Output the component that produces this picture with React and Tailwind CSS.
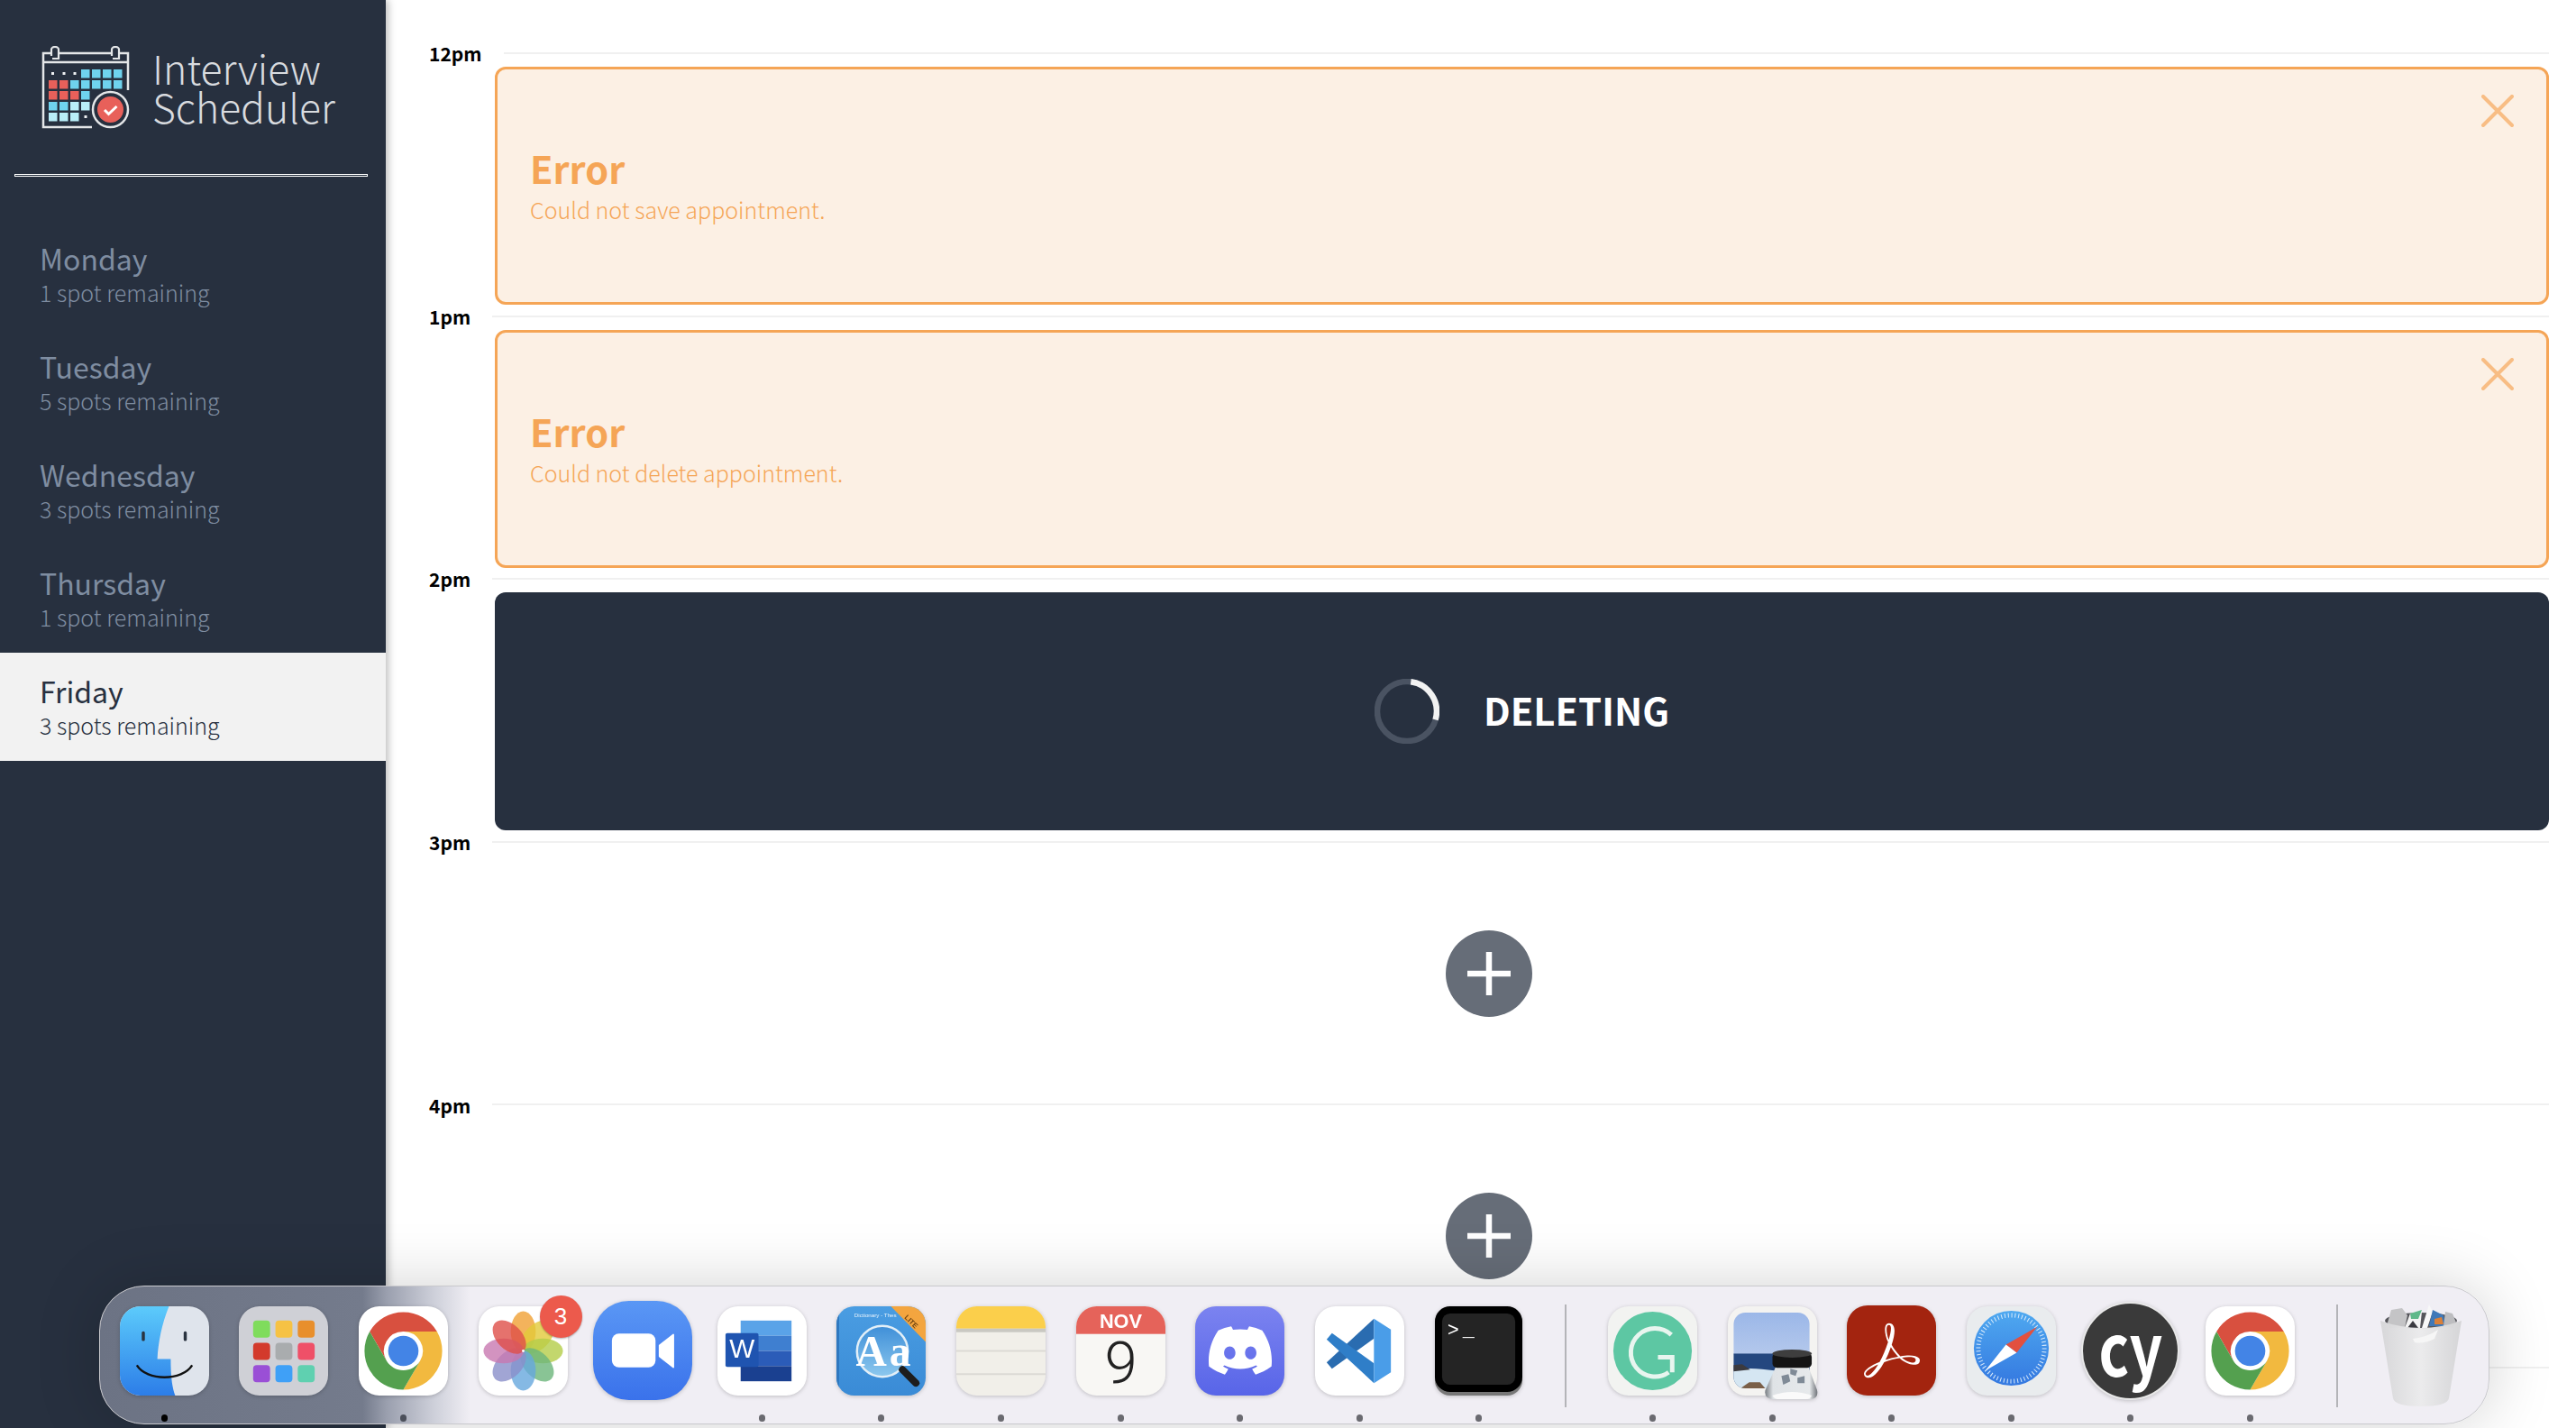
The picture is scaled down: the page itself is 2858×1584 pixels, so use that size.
import { SiDiscord, SiAdobeacrobatreader } from "react-icons/si";

const days = [
  { name: "Monday", spots: "1 spot remaining" },
  { name: "Tuesday", spots: "5 spots remaining" },
  { name: "Wednesday", spots: "3 spots remaining" },
  { name: "Thursday", spots: "1 spot remaining" },
  { name: "Friday", spots: "3 spots remaining", selected: true },
];

const Logo = () => {
  const cols = [54, 66, 78, 90, 102, 114, 126];
  const rows = [77, 89, 101, 113, 125];
  const blue = "#6fd3ee";
  const red = "#e8605a";
  const pale = "#b9eef8";
  const cells = [
    [null, null, null, blue, blue, blue, blue],
    [red, red, blue, blue, blue, blue, blue],
    [red, red, red, blue],
    [blue, blue, pale, pale],
    [pale, pale, pale],
  ];
  return (
    <svg viewBox="46 51 98 92" className="w-[98px] h-[92px] shrink-0">
      <path
        d="M102 141H48V59H57M66 59H124M133 59H142V100M48 69H142"
        fill="none"
        stroke="#e4e6e8"
        strokeWidth="2.5"
      />
      <path d="M57 62V55a4 3 0 0 1 8 0V65H58M124 62V55a4 3 0 0 1 8 0V65H125" fill="none" stroke="#e4e6e8" strokeWidth="2.2" />
      {cells.map((row, r) =>
        row.map((c, i) =>
          c ? <rect key={`${r}-${i}`} x={cols[i]} y={rows[r]} width="9.5" height="9.5" fill={c} /> : null
        )
      )}
      {[57, 69.5, 81.5].map((x) => (
        <rect key={x} x={x} y="80" width="3" height="3" fill="#eef0f2" />
      ))}
      <rect x="93.5" y="128" width="3" height="3" fill="#eef0f2" />
      <circle cx="122.5" cy="121.5" r="19.5" fill="#27303f" stroke="#e4e6e8" strokeWidth="2.5" />
      <circle cx="122.5" cy="121.5" r="14.5" fill={red} />
      <path d="M116 122l4.5 4.5 9-8.5" fill="none" stroke="#fff" strokeWidth="3" />
    </svg>
  );
};

const Sidebar = () => (
  <aside className="w-[428px] shrink-0 bg-[#27303f] shadow-[3px_0_8px_rgba(0,0,0,0.25)] z-10">
    <div className="flex items-center pl-[46px] pt-[51px] h-[143px] gap-[25px]">
      <Logo />
      <div className="text-[44.5px] leading-[43px] font-light text-[#d8dbdf] mt-[-3px]">
        <div>Interview</div>
        <div>Scheduler</div>
      </div>
    </div>
    <div className="ml-[16px] w-[392px] h-[3px] mt-[50px] border border-white" />
    <ul className="mt-[48px]">
      {days.map((d) => (
        <li
          key={d.name}
          className={`h-[120px] pl-[44px] pt-[20px] ${d.selected ? "bg-[#f2f2f2] text-[#27303f]" : "text-[#7f8da1]"}`}
        >
          <h2 className="text-[32px] leading-[44px]">{d.name}</h2>
          <h3 className="text-[25px] leading-[32px] font-light">{d.spots}</h3>
        </li>
      ))}
    </ul>
  </aside>
);

const Header = ({ time }) => (
  <div className="flex items-center h-[2px] shrink-0">
    <span className="text-[21px] font-bold text-black mt-[2px]">{time}</span>
    <div className="flex-1 h-[2px] bg-[#f0f0f0] ml-[24px]" />
  </div>
);

const ErrorCard = ({ message }) => (
  <div className="relative ml-[73px] mt-[14px] h-[264px] rounded-[12px] border-[3px] border-[#f5a556] bg-[#fcf0e4] pl-[36px] pt-[80px] text-[#f5a556]">
    <h2 className="text-[41.5px] leading-[59px] font-bold">Error</h2>
    <p className="text-[25px] leading-[32px] font-light">{message}</p>
    <svg viewBox="0 0 36 36" className="absolute right-[36px] top-[28px] w-[36px] h-[36px]">
      <path d="M2 2L34 34M34 2L2 34" stroke="#f8bd84" strokeWidth="4" strokeLinecap="round" />
    </svg>
  </div>
);

const DeletingCard = () => (
  <div className="ml-[73px] mt-[14px] h-[264px] rounded-[12px] bg-[#27303f] flex items-center justify-center gap-[49px]">
    <svg viewBox="0 0 72 72" className="w-[72px] h-[72px]">
      <circle cx="36" cy="36" r="33" fill="none" stroke="#4a5362" strokeWidth="6.5" />
      <path d="M42 3.5A33 33 0 0 1 67 47" transform="rotate(-3 36 36)" fill="none" stroke="#f2f2f2" strokeWidth="6.5" />
    </svg>
    <h4 className="text-[41.7px] leading-none font-bold text-white mt-[-2px]">DELETING</h4>
  </div>
);

const AddButton = () => (
  <div className="flex-1 flex items-center justify-center">
    <div className="w-[96px] h-[96px] rounded-full bg-[#666d78] flex items-center justify-center">
      <svg viewBox="0 0 48 48" className="w-[48px] h-[48px]">
        <path d="M24 0V48M0 24H48" stroke="#fff" strokeWidth="6.5" />
      </svg>
    </div>
  </div>
);

const Slot = ({ time, children }) => (
  <div className="h-[291.6px] flex flex-col">
    <Header time={time} />
    {children}
  </div>
);

const Chrome = () => (
  <svg viewBox="0 0 100 100" className="w-full h-full">
    <rect width="100" height="100" rx="23" fill="#fff" />
    <path d="M12.3 28.25A43.5 43.5 0 0 1 87.7 28.25L50 28.25A21.75 21.75 0 0 0 31.2 61Z" fill="#d8503f" />
    <path d="M87.7 28.25A43.5 43.5 0 0 1 50 93.5L68.8 61A21.75 21.75 0 0 0 50 28.25Z" fill="#f2b93f" />
    <path d="M50 93.5A43.5 43.5 0 0 1 12.3 28.25L31.2 61A21.75 21.75 0 0 0 68.8 61Z" fill="#54a04f" />
    <circle cx="50" cy="50" r="21" fill="#fff" />
    <circle cx="50" cy="50" r="17" fill="#4384e6" />
  </svg>
);

const Finder = () => (
  <svg viewBox="0 0 100 100" className="w-full h-full">
    <defs>
      <linearGradient id="finderBlue" x1="0" y1="0" x2="0" y2="1">
        <stop offset="0" stopColor="#5ccbfb" />
        <stop offset="1" stopColor="#2c7de8" />
      </linearGradient>
      <clipPath id="finderClip">
        <rect width="100" height="100" rx="23" />
      </clipPath>
    </defs>
    <g clipPath="url(#finderClip)">
      <rect width="100" height="100" fill="#dfe4ec" />
      <path d="M55 0C47 20 43 40 42 59H57C57 75 58 90 62 100H0V0Z" fill="url(#finderBlue)" />
    </g>
    <rect x="24.5" y="28" width="3.5" height="11" rx="1.7" fill="#2a3340" />
    <rect x="71.5" y="28" width="3.5" height="11" rx="1.7" fill="#2a3340" />
    <path d="M19 66C30 84 70 84 81 66" fill="none" stroke="#111" strokeWidth="2.4" />
  </svg>
);

const Launchpad = () => {
  const tiles = ["#7fdc5c", "#f6c244", "#e88f2c", "#d33a2c", "#a9acae", "#ef5068", "#9a4fd6", "#3fa0f7", "#5fd0b0"];
  return (
    <svg viewBox="0 0 100 100" className="w-full h-full">
      <rect width="100" height="100" rx="23" fill="#cfd0d6" />
      {tiles.map((c, i) => (
        <rect key={c} x={16 + (i % 3) * 25} y={16 + Math.floor(i / 3) * 25} width="19" height="19" rx="4" fill={c} />
      ))}
    </svg>
  );
};

const Photos = () => {
  const petals = ["#f0a033", "#e2c93a", "#b4cd48", "#6cb57a", "#66a8dd", "#8a8ec9", "#c878b0", "#de4f48"];
  return (
    <svg viewBox="0 0 100 100" className="w-full h-full">
      <rect width="100" height="100" rx="23" fill="#fff" />
      {petals.map((c, i) => (
        <ellipse key={c} cx="50" cy="28" rx="14" ry="22.5" fill={c} opacity="0.8" transform={`rotate(${i * 45} 50 50)`} />
      ))}
      <circle cx="50" cy="50" r="1.5" fill="#fff" />
    </svg>
  );
};

const ZoomApp = () => (
  <svg viewBox="0 0 100 100" className="w-full h-full">
    <defs>
      <linearGradient id="zoomBlue" x1="0" y1="0" x2="0" y2="1">
        <stop offset="0" stopColor="#5a97f5" />
        <stop offset="1" stopColor="#3a72eb" />
      </linearGradient>
    </defs>
    <rect width="100" height="100" rx="36" fill="url(#zoomBlue)" />
    <rect x="19" y="33" width="44" height="34" rx="7" fill="#fff" />
    <path d="M67 45L81 34V67L67 56Z" fill="#fff" stroke="#fff" strokeWidth="1.5" strokeLinejoin="round" />
  </svg>
);

const Word = () => (
  <svg viewBox="0 0 100 100" className="w-full h-full">
    <rect width="100" height="100" rx="23" fill="#fff" />
    <rect x="26" y="16" width="57" height="17" fill="#5aa3e8" />
    <rect x="26" y="33" width="57" height="17" fill="#3f7fd0" />
    <rect x="26" y="50" width="57" height="17" fill="#2b5cb8" />
    <rect x="26" y="67" width="57" height="17" fill="#1a4090" />
    <rect x="9" y="30" width="37" height="38" rx="2" fill="#1f54b0" />
    <text x="27.5" y="58" textAnchor="middle" fontSize="30" fontFamily="Liberation Sans" fill="#fff">W</text>
  </svg>
);

const Dictionary = () => (
  <svg viewBox="0 0 100 100" className="w-full h-full">
    <defs>
      <clipPath id="dictClip">
        <rect width="100" height="100" rx="20" />
      </clipPath>
      <linearGradient id="dictBlue" x1="0" y1="0" x2="0" y2="1">
        <stop offset="0" stopColor="#4a9de2" />
        <stop offset="1" stopColor="#3a8bd6" />
      </linearGradient>
      <linearGradient id="lensBlue" x1="0" y1="0" x2="0" y2="1">
        <stop offset="0" stopColor="#3f8fd8" />
        <stop offset="1" stopColor="#8cc8ee" />
      </linearGradient>
    </defs>
    <g clipPath="url(#dictClip)">
      <rect width="100" height="100" fill="url(#dictBlue)" />
      <rect width="3" height="100" fill="#2f78c0" />
      <path d="M61 0H100V40Z" fill="#f3a53f" />
      <text x="84" y="20" textAnchor="middle" fontSize="8" fontWeight="bold" fontFamily="Liberation Sans" fill="#6e4310" transform="rotate(45 84 17)">LITE</text>
    </g>
    <text x="20" y="12" fontSize="6.3" fontFamily="Liberation Sans" fill="#e6f2fb">Dictionary - Thes</text>
    <circle cx="51.5" cy="50.5" r="28.5" fill="url(#lensBlue)" stroke="#e2eff8" strokeWidth="2.5" />
    <text x="54" y="67" textAnchor="middle" fontSize="48" letterSpacing="3" fontWeight="bold" fontFamily="Liberation Serif" fill="#fff">Aa</text>
    <path d="M74 71L89 86" stroke="#1d1d1d" strokeWidth="8" strokeLinecap="round" />
  </svg>
);

const Notes = () => (
  <svg viewBox="0 0 100 100" className="w-full h-full">
    <defs>
      <clipPath id="notesClip">
        <rect width="100" height="100" rx="23" />
      </clipPath>
    </defs>
    <g clipPath="url(#notesClip)">
      <rect width="100" height="100" fill="#f1efe9" />
      <rect width="100" height="25" fill="#fbcf4b" />
      <rect y="25" width="100" height="4" fill="#c9c8c2" />
      <rect y="49" width="100" height="2" fill="#dcdad5" />
      <rect y="75" width="100" height="2" fill="#dcdad5" />
    </g>
  </svg>
);

const CalendarApp = () => (
  <svg viewBox="0 0 100 100" className="w-full h-full">
    <defs>
      <clipPath id="calClip">
        <rect width="100" height="100" rx="23" />
      </clipPath>
    </defs>
    <g clipPath="url(#calClip)">
      <rect width="100" height="100" fill="#f8f7f4" />
      <rect width="100" height="31" fill="#e5635a" />
    </g>
    <text x="50" y="24" textAnchor="middle" fontSize="22" fontWeight="bold" fontFamily="Liberation Sans" fill="#fff">NOV</text>
    <text x="50" y="86" textAnchor="middle" fontSize="66" fontWeight="300" fontFamily="Roboto" fill="#222">9</text>
  </svg>
);

const Discord = () => (
  <div className="w-full h-full rounded-[23px] bg-[linear-gradient(180deg,#7b83f0,#5865e8)] flex items-center justify-center">
    <SiDiscord className="w-[70px] h-[70px] text-white" />
  </div>
);

const VSCode = () => (
  <svg viewBox="0 0 100 100" className="w-full h-full">
    <rect width="100" height="100" rx="23" fill="#fff" />
    <path d="M66 14L13 63L19 70L66 36Z" fill="#2a6cb0" />
    <path d="M13 37L19 30L66 64V86Z" fill="#2f7ec8" />
    <path d="M66 14L85 26V74L66 86Z" fill="#4a9de8" />
  </svg>
);

const Terminal = () => (
  <svg viewBox="0 0 100 100" className="w-full h-full">
    <rect x="1" y="2" width="98" height="98" rx="17" fill="#777" />
    <rect x="1" y="0" width="98" height="96" rx="17" fill="#000" />
    <rect x="9" y="8" width="82" height="80" rx="9" fill="#242424" />
    <text x="15" y="33" fontSize="22" fontFamily="Liberation Mono" fill="#fff">&gt;</text>
    <text x="32" y="33" fontSize="22" fontWeight="bold" fontFamily="Liberation Mono" fill="#fff">_</text>
  </svg>
);

const Grammarly = () => (
  <svg viewBox="0 0 100 100" className="w-full h-full">
    <rect width="100" height="100" rx="23" fill="#f2f3f1" />
    <circle cx="50" cy="50" r="44" fill="#5dc7a3" />
    <path d="M71 32A27 27 0 1 0 68 74M56 57H72V74" fill="none" stroke="#e8f5ef" strokeWidth="5" />
  </svg>
);

const Preview = () => (
  <svg viewBox="0 0 100 100" className="w-full h-full overflow-visible">
    <defs>
      <clipPath id="photoClip">
        <rect x="6.5" y="7" width="85" height="85" rx="13" />
      </clipPath>
      <linearGradient id="sky" x1="0" y1="0" x2="0" y2="1">
        <stop offset="0" stopColor="#9bb7e8" />
        <stop offset="1" stopColor="#b4c8ec" />
      </linearGradient>
      <linearGradient id="jarGlass" x1="0" y1="0" x2="1" y2="0">
        <stop offset="0" stopColor="#777c82" />
        <stop offset="0.15" stopColor="#dfe3e6" />
        <stop offset="0.85" stopColor="#e6e9eb" />
        <stop offset="1" stopColor="#6f7379" />
      </linearGradient>
    </defs>
    <rect width="100" height="100" rx="20" fill="#f4f3f1" />
    <g clipPath="url(#photoClip)">
      <rect x="6" y="7" width="86" height="47" fill="url(#sky)" />
      <rect x="6" y="53" width="86" height="40" fill="#24477f" />
      <path d="M6 72C20 68 36 70 52 72V93H6Z" fill="#d5e6f2" />
      <path d="M6 66L16 65L25 71L6 73Z" fill="#3b3a3e" />
      <path d="M14 92L24 85L36 85L42 92Z" fill="#7a5f48" />
    </g>
    <path d="M54 67H90L100 94Q102 104 92 104H52Q40 104 42 94Z" fill="url(#jarGlass)" />
    <path d="M50 100Q72 92 94 100Q92 104 88 104H56Q52 104 50 100Z" fill="#fafafa" />
    <path d="M60 78L68 76L70 84L62 88ZM70 70L78 72L76 78L70 76ZM78 80L86 78L86 86L78 86Z" fill="#7f8a96" />
    <rect x="50" y="52" width="44" height="17" rx="5" fill="#141414" />
    <ellipse cx="72" cy="53" rx="22" ry="4.5" fill="#3e3e3e" />
  </svg>
);

const Acrobat = () => (
  <div className="w-[102px] h-[100px] rounded-[23px] bg-[#a3240f] flex items-center justify-center">
    <SiAdobeacrobatreader className="w-[62px] h-[62px] text-white" />
  </div>
);

const Safari = () => (
  <svg viewBox="0 0 100 100" className="w-full h-full">
    <defs>
      <linearGradient id="safariBlue" x1="0" y1="0" x2="0" y2="1">
        <stop offset="0" stopColor="#4fa9f0" />
        <stop offset="1" stopColor="#3478e0" />
      </linearGradient>
    </defs>
    <rect width="100" height="100" rx="23" fill="#e9ecee" />
    <circle cx="50" cy="47" r="42" fill="url(#safariBlue)" />
    <circle cx="50" cy="47" r="37" fill="none" stroke="#dcecfb" strokeWidth="5" strokeDasharray="1 2.87" />
    <path d="M79 23L44 43L56 52Z" fill="#e2503f" />
    <path d="M21 72L44 43L56 52Z" fill="#fff" />
  </svg>
);

const Cypress = () => (
  <div className="w-[109px] h-[109px] shrink-0 rounded-full bg-[#3a3a3a] border-2 border-[#e8e8e8] flex items-center justify-center text-white text-[64px] leading-none font-bold pb-[12px]">
    <span className="scale-y-125">cy</span>
  </div>
);

const Trash = () => (
  <svg viewBox="0 0 90 115" className="w-[90px] h-[115px]">
    <defs>
      <linearGradient id="glass" x1="0" y1="0" x2="1" y2="0">
        <stop offset="0" stopColor="#d6d6d8" />
        <stop offset="0.5" stopColor="#ebebec" />
        <stop offset="1" stopColor="#d4d4d6" />
      </linearGradient>
    </defs>
    <ellipse cx="45" cy="20" rx="40" ry="9" fill="#55555a" />
    <path d="M8 22L12 8L24 6L30 14L27 28H10Z" fill="#c4c4c6" />
    <path d="M27 28L33 12L46 10L44 28Z" fill="#f4f4f4" />
    <path d="M33 12L46 8L42 18L34 18Z" fill="#5fb88a" />
    <path d="M30 28L36 20L42 28Z" fill="#3a3a40" />
    <path d="M46 28L54 2L58 10L52 28Z" fill="#f8f8f8" />
    <path d="M54 26L58 8L70 14L72 26Z" fill="#3f78b8" />
    <path d="M60 18L68 16L70 24L60 24Z" fill="#d9803a" />
    <path d="M70 26L72 10L80 12L84 22L80 28Z" fill="#bdbdc0" />
    <path d="M0 20Q45 36 90 20L76 106Q74 115 45 115Q16 115 14 106Z" fill="url(#glass)" fillOpacity="0.96" />
    <path d="M36 40Q52 38 64 30L60 40Q48 46 38 44Z" fill="#f6f6f6" />
  </svg>
);

const dockLeft = [
  { key: "finder", Icon: Finder, dot: "bg-black" },
  { key: "launchpad", Icon: Launchpad },
  { key: "chrome", Icon: Chrome, dot: "bg-[#4b4f5a]" },
  { key: "photos", Icon: Photos, badge: "3" },
  { key: "zoom", Icon: ZoomApp, big: true },
  { key: "word", Icon: Word, dot: "bg-[#6a6a70]" },
  { key: "dictionary", Icon: Dictionary, dot: "bg-[#6a6a70]" },
  { key: "notes", Icon: Notes, dot: "bg-[#6a6a70]" },
  { key: "calendar", Icon: CalendarApp, dot: "bg-[#6a6a70]" },
  { key: "discord", Icon: Discord, dot: "bg-[#6a6a70]" },
  { key: "vscode", Icon: VSCode, dot: "bg-[#6a6a70]" },
  { key: "terminal", Icon: Terminal, dot: "bg-[#6a6a70]" },
];

const dockRight = [
  { key: "grammarly", Icon: Grammarly, dot: "bg-[#6a6a70]" },
  { key: "preview", Icon: Preview, dot: "bg-[#6a6a70]" },
  { key: "acrobat", Icon: Acrobat, dot: "bg-[#6a6a70]" },
  { key: "safari", Icon: Safari, dot: "bg-[#6a6a70]" },
  { key: "cypress", Icon: Cypress, dot: "bg-[#6a6a70]" },
  { key: "chrome2", Icon: Chrome, dot: "bg-[#6a6a70]" },
];

const DockItem = ({ item }) => {
  const { Icon, dot, badge, big } = item;
  return (
    <div className="w-[132.6px] shrink-0 flex flex-col items-center">
      <div className="h-[142px] flex items-center justify-center relative">
        <div className={`flex items-center justify-center ${big ? "w-[110px] h-[110px]" : "w-[99px] h-[99px]"} drop-shadow-[0_1px_2px_rgba(0,0,0,0.2)]`}>
          <Icon />
        </div>
        {badge && (
          <span className="absolute top-[10px] right-[-16px] w-[47px] h-[47px] rounded-full bg-[#ec5a4c] text-white text-[26px] font-['Liberation_Sans',sans-serif] flex items-center justify-center shadow-[0_1px_2px_rgba(0,0,0,0.3)]">
            {badge}
          </span>
        )}
      </div>
      {dot && <div className={`w-[7px] h-[8px] rounded-full ${dot}`} />}
    </div>
  );
};

const Separator = () => (
  <div className="w-[60px] shrink-0 flex justify-center pt-[20px]">
    <div className="w-[2px] h-[114px] bg-[#b4b4b8]" />
  </div>
);

const Dock = () => (
  <div className="absolute left-[110px] bottom-[4px] w-[2652px] h-[154px] rounded-[50px] border border-[#c8c8cc] shadow-[0_0_70px_rgba(0,0,0,0.18)] bg-[linear-gradient(90deg,#6c7384_0%,#747b8c_11%,#9a9fae_12%,#ced0da_14%,#f0eef4_15.5%)] flex pl-[5px] z-20">
    {dockLeft.map((item) => (
      <DockItem key={item.key} item={item} />
    ))}
    <Separator />
    {dockRight.map((item) => (
      <DockItem key={item.key} item={item} />
    ))}
    <Separator />
    <div className="flex-1 flex items-center justify-center pr-[12px] pb-[2px]">
      <Trash />
    </div>
  </div>
);

const App = () => {
  return (
    <div className="relative flex w-full h-screen overflow-hidden bg-white font-['Noto_Sans_CJK_SC','Noto_Sans',sans-serif]">
      <Sidebar />
      <main className="flex-1 pl-[48px] pr-[30px] pt-[58px]">
        <Slot time="12pm">
          <ErrorCard message="Could not save appointment." />
        </Slot>
        <Slot time="1pm">
          <ErrorCard message="Could not delete appointment." />
        </Slot>
        <Slot time="2pm">
          <DeletingCard />
        </Slot>
        <Slot time="3pm">
          <AddButton />
        </Slot>
        <Slot time="4pm">
          <AddButton />
        </Slot>
        <Slot time="5pm" />
      </main>
      <Dock />
    </div>
  );
};

export default App;
